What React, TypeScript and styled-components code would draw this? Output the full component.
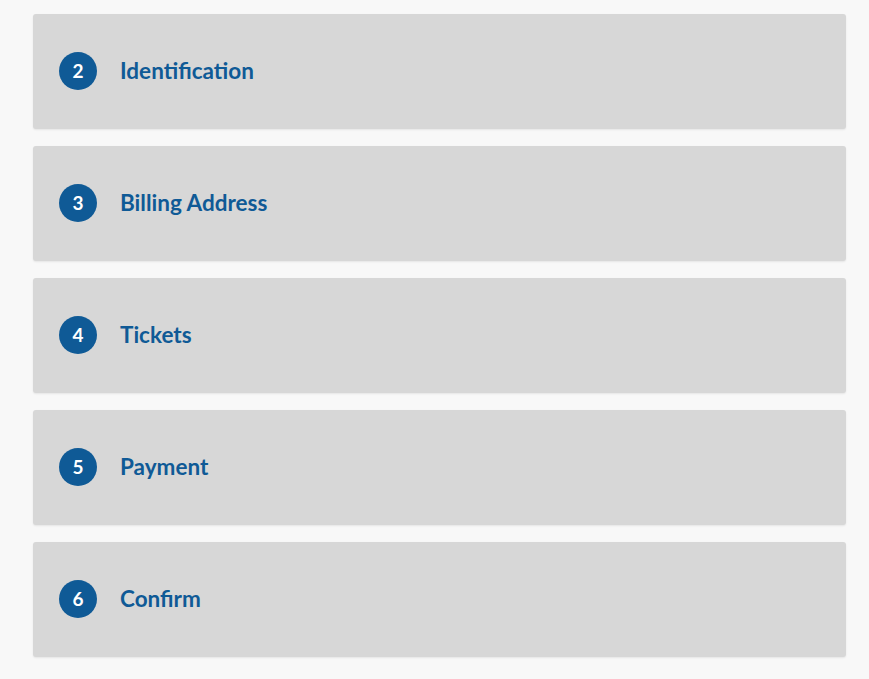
import styled, { createGlobalStyle } from "styled-components";

const GlobalStyle = createGlobalStyle`
  html, body {
    margin: 0;
    padding: 0;
    background: #f8f8f8;
    font-family: Lato, "Open Sans", sans-serif;
  }
`;

const steps = [
  { num: 2, label: "Identification" },
  { num: 3, label: "Billing Address" },
  { num: 4, label: "Tickets" },
  { num: 5, label: "Payment" },
  { num: 6, label: "Confirm" },
];

const App = () => {
  return (
    <>
      <GlobalStyle />
      <StepList>
        {steps.map((step) => (
          <StepCard key={step.num}>
            <StepNumber>{step.num}</StepNumber>
            <StepTitle>{step.label}</StepTitle>
          </StepCard>
        ))}
      </StepList>
    </>
  );
};
export default App;

const StepList = styled.div`
  display: flex;
  flex-direction: column;
  gap: 17px;
  padding: 14px 23px 20px 33px;
`;

const StepCard = styled.div`
  display: flex;
  align-items: center;
  height: 115px;
  box-sizing: border-box;
  padding: 0 26px 2px;
  background: #d7d7d7;
  border-radius: 3px;
  box-shadow: 0 1px 2px rgba(0, 0, 0, 0.08);
`;

const StepNumber = styled.div`
  width: 38px;
  height: 38px;
  border-radius: 50%;
  background: #0f5a96;
  color: #fff;
  display: flex;
  align-items: center;
  justify-content: center;
  font-size: 19px;
  font-weight: 700;
  flex-shrink: 0;
`;

const StepTitle = styled.div`
  margin-left: 23px;
  color: #0f5a96;
  font-size: 22.5px;
  font-weight: 700;
`;
